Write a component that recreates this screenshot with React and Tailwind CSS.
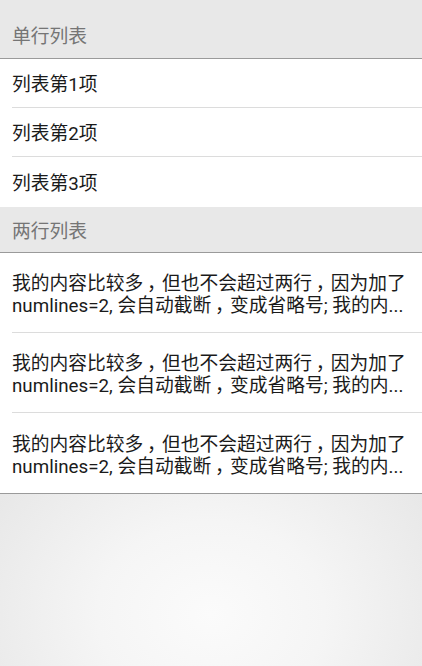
import React from "react";

const font = { fontFamily: 'Roboto, "Noto Sans CJK SC", sans-serif' };

function Txt({ text }) {
  const parts = text.split("，");
  return (
    <>
      {parts.map((p, i) => (
        <React.Fragment key={i}>
          {p}
          {i < parts.length - 1 && <span className="relative left-[0.2em]">，</span>}
        </React.Fragment>
      ))}
    </>
  );
}

function Header({ children, tall }) {
  return (
    <div
      className={`flex items-center bg-[#e8e8e8] border-b border-[#9a9a9a] px-3 text-[18.75px] leading-[24px] text-[#757575] ${
        tall ? "h-[59px] pt-[16px]" : "h-[46px] pt-[4px]"
      }`}
    >
      {children}
    </div>
  );
}

const line1 = "我的内容比较多，但也不会超过两行，因为加了";
const line2 = "numlines=2, 会自动截断，变成省略号; 我的内...";

export default function App() {
  return (
    <div className="h-screen flex flex-col bg-white" style={font}>
      <Header tall>单行列表</Header>
      <div className="bg-white">
        {["列表第1项", "列表第2项", "列表第3项"].map((t, i) => (
          <div key={t} className="pl-3">
            <div
              className={`flex items-center pt-[4px] text-[18.75px] leading-[24px] text-[#1a1a1a] ${
                i < 2 ? "h-[49px] border-b border-[#dcdcdc]" : "h-[50px]"
              }`}
            >
              {t}
            </div>
          </div>
        ))}
      </div>
      <Header>两行列表</Header>
      <div className="bg-white border-b border-[#9a9a9a]">
        {[0, 1, 2].map((i) => (
          <div key={i} className="pl-3">
            <div
              className={`h-[80px] flex flex-col justify-center pt-[5px] text-[18.75px] leading-[22px] text-[#1a1a1a] ${
                i < 2 ? "border-b border-[#dcdcdc]" : ""
              }`}
            >
              <div className="whitespace-nowrap">
                <Txt text={line1} />
              </div>
              <div className="whitespace-nowrap">
                <Txt text={line2} />
              </div>
            </div>
          </div>
        ))}
      </div>
      <div className="flex-1 bg-[radial-gradient(ellipse_60%_120%_at_50%_70%,#fbfbfb_0%,#f5f5f5_45%,#e8e8e8_100%)]" />
    </div>
  );
}
